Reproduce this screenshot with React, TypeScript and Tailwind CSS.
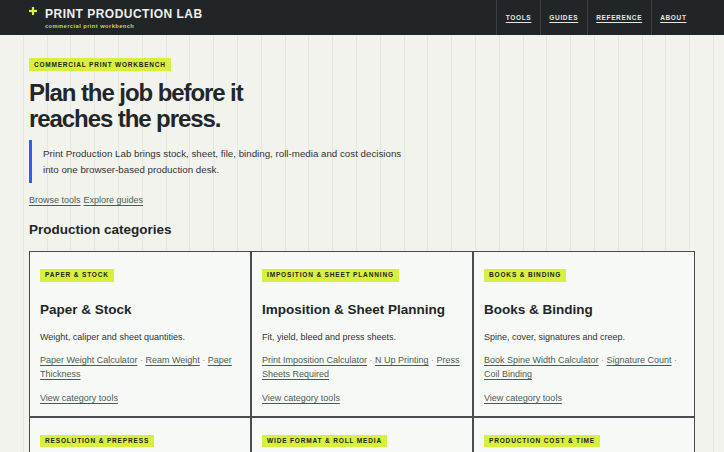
const navItems = ["Tools", "Guides", "Reference", "About"];

interface Category {
  id: string;
  tag: string;
  title: string;
  description: string;
  links: string[];
}

const categories: Category[] = [
  {
    id: "paper",
    tag: "Paper & Stock",
    title: "Paper & Stock",
    description: "Weight, caliper and sheet quantities.",
    links: ["Paper Weight Calculator", "Ream Weight", "Paper Thickness"],
  },
  {
    id: "imposition",
    tag: "Imposition & Sheet Planning",
    title: "Imposition & Sheet Planning",
    description: "Fit, yield, bleed and press sheets.",
    links: ["Print Imposition Calculator", "N Up Printing", "Press Sheets Required"],
  },
  {
    id: "binding",
    tag: "Books & Binding",
    title: "Books & Binding",
    description: "Spine, cover, signatures and creep.",
    links: ["Book Spine Width Calculator", "Signature Count", "Coil Binding"],
  },
  {
    id: "prepress",
    tag: "Resolution & Prepress",
    title: "Resolution & Prepress",
    description: "DPI, bleed, safe area and file checks.",
    links: ["DPI Calculator", "Bleed Size", "Safe Area"],
  },
  {
    id: "wide",
    tag: "Wide Format & Roll Media",
    title: "Wide Format & Roll Media",
    description: "Roll length, banners and tiling.",
    links: ["Roll Length Calculator", "Banner Size", "Tile Printing"],
  },
  {
    id: "cost",
    tag: "Production Cost & Time",
    title: "Production Cost & Time",
    description: "Quotes, run time and waste.",
    links: ["Print Cost Calculator", "Press Run Time", "Spoilage Allowance"],
  },
];

function Tag({ children }: { children: string }) {
  return (
    <span className="block w-fit bg-[#d8f03c] px-[5px] py-[3px] text-[6.5px] font-bold uppercase leading-[6.5px] tracking-[0.13em] text-[#1d2418]">
      {children}
    </span>
  );
}

function CategoryCard({ category }: { category: Category }) {
  return (
    <div className="flex flex-col border border-[#4a4d4f] bg-[#f7f9f6] px-[10px] pt-[17px] pb-[11px]">
      <Tag>{category.tag}</Tag>
      <h3 className="mt-[20px] text-[13.5px] font-bold leading-[16px] text-[#222628]">{category.title}</h3>
      <p className="mt-[13px] text-[9px] leading-[13px] text-[#2f3335]">{category.description}</p>
      <p className="mt-[9.5px] text-[9px] leading-[14px] text-[#4a5d55]">
        {category.links.map((link, i) => (
          <span key={link}>
            <a href="#" className="underline underline-offset-[1.5px]">
              {link}
            </a>
            {i < category.links.length - 1 && <span className="text-[#8a948f]"> · </span>}
          </span>
        ))}
      </p>
      <a href="#" className="mt-[9.5px] self-start text-[9px] leading-[14px] text-[#4a5d55] underline underline-offset-[1.5px]">
        View category tools
      </a>
    </div>
  );
}

export default function App() {
  return (
    <div className="min-h-screen bg-[#f3f3ee] bg-[repeating-linear-gradient(90deg,transparent_0,transparent_22.8px,#e6e6e0_22.8px,#e6e6e0_23.8px)] font-['Liberation_Sans',Arial,sans-serif] text-[#222628]">
      <header className="flex h-[35px] items-stretch justify-between bg-[#222527] px-[29px]">
        <div className="flex items-start gap-[8px] pt-[7px]">
          <svg width="8" height="8" viewBox="0 0 8 8">
            <rect x="2.9" y="0" width="2.2" height="8" fill="#d8f03c" />
            <rect x="0" y="2.9" width="8" height="2.2" fill="#d8f03c" />
          </svg>
          <div className="flex flex-col">
            <span className="text-[12px] font-bold uppercase leading-[14px] tracking-[0.04em] text-[#eef0ee]">
              Print Production Lab
            </span>
            <span className="mt-[2px] text-[5.7px] font-bold leading-[6px] tracking-[0.08em] text-[#c6dd3c]">
              commercial print workbench
            </span>
          </div>
        </div>
        <nav className="flex items-stretch">
          {navItems.map((item) => (
            <a
              key={item}
              href="#"
              className="flex items-center border-l border-[#3b3f42] px-[8.5px] text-[6.5px] font-bold uppercase tracking-[0.1em] text-[#e4e6e4] underline underline-offset-[1.5px]"
            >
              {item}
            </a>
          ))}
        </nav>
      </header>

      <main className="flex flex-col px-[29px] pt-[23px] pb-10">
        <span className="block w-fit bg-[#d8f03c] px-[5px] py-[3.5px] text-[6.5px] font-bold uppercase leading-[6px] tracking-[0.12em] text-[#1d2418]">
          Commercial print workbench
        </span>
        <h1 className="mt-[9px] max-w-[250px] text-[24px] font-bold leading-[25.5px] tracking-[-0.045em] text-[#222628]">
          Plan the job before it reaches the press.
        </h1>
        <blockquote className="mt-[9px] max-w-[380px] border-l-[3px] border-[#2563eb] py-[6px] pl-[11px] text-[9.75px] leading-[15.5px] text-[#2f3335]">
          Print Production Lab brings stock, sheet, file, binding, roll-media and cost decisions into one browser-based production desk.
        </blockquote>
        <div className="mt-[10px] flex gap-[3px] text-[9px] leading-[14px] text-[#4a5d55]">
          <a href="#" className="underline underline-offset-[1.5px]">Browse tools</a>
          <a href="#" className="underline underline-offset-[1.5px]">Explore guides</a>
        </div>

        <h2 className="mt-[15px] text-[13.5px] font-bold leading-[16px]">Production categories</h2>
        <div className="mt-[13px] grid grid-cols-3">
          {categories.map((c) => (
            <CategoryCard key={c.id} category={c} />
          ))}
        </div>
      </main>
    </div>
  );
}
